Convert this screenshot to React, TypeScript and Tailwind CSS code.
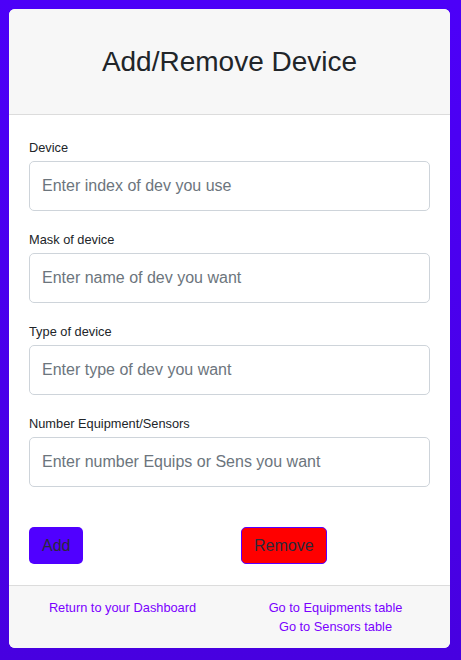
const fields = [
  { label: 'Device', placeholder: 'Enter index of dev you use' },
  { label: 'Mask of device', placeholder: 'Enter name of dev you want' },
  { label: 'Type of device', placeholder: 'Enter type of dev you want' },
  { label: 'Number Equipment/Sensors', placeholder: 'Enter number Equips or Sens you want' },
];

export default function App() {
  return (
    <div className="min-h-screen bg-gradient-to-b from-[#4c00f8] to-[#4700e0] pl-[9px] pt-[9px] font-['Liberation_Sans',Arial,sans-serif]">
      <div className="flex h-[639px] w-[441px] flex-col overflow-hidden rounded-[6px] bg-white">
        {/* header */}
        <div className="flex h-[106px] shrink-0 items-center justify-center border-b border-[#dcdcdc] bg-[#f7f7f7]">
          <h1 className="text-[28px] text-[#212529]">Add/Remove Device</h1>
        </div>

        {/* body */}
        <div className="flex-1 px-[20px] pt-[24px]">
          {fields.map((f) => (
            <div key={f.label} className="mb-[20px]">
              <label className="mb-[4px] block text-[12.8px] leading-[18px] text-[#212529]">{f.label}</label>
              <input
                type="text"
                placeholder={f.placeholder}
                className="block h-[50px] w-full rounded-[5px] border border-[#ced4da] bg-white px-[12px] text-[16px] text-[#212529] outline-none placeholder:text-[#6c757d]"
              />
            </div>
          ))}

          <div className="grid grid-cols-[212px_1fr] pt-[20px]">
            <div>
              <button className="h-[37px] rounded-[5px] bg-[#5000ff] px-[13px] text-[16px] text-[#2a2a3a]">Add</button>
            </div>
            <div>
              <button className="h-[37px] rounded-[5px] border border-[#5a00ff] bg-[#ff0000] px-[12px] text-[16px] text-[#2a2a3a]">Remove</button>
            </div>
          </div>
        </div>

        {/* footer */}
        <div className="flex h-[63px] shrink-0 border-t border-[#dcdcdc] bg-[#f7f7f7] pl-[7px] pt-[12px] text-[12.8px] leading-[19px] text-[#7a00ff]">
          <div className="w-[213px] text-center">
            <a href="#">Return to your Dashboard</a>
          </div>
          <div className="flex w-[213px] flex-col items-center">
            <a href="#">Go to Equipments table</a>
            <a href="#">Go to Sensors table</a>
          </div>
        </div>
      </div>
    </div>
  );
}
